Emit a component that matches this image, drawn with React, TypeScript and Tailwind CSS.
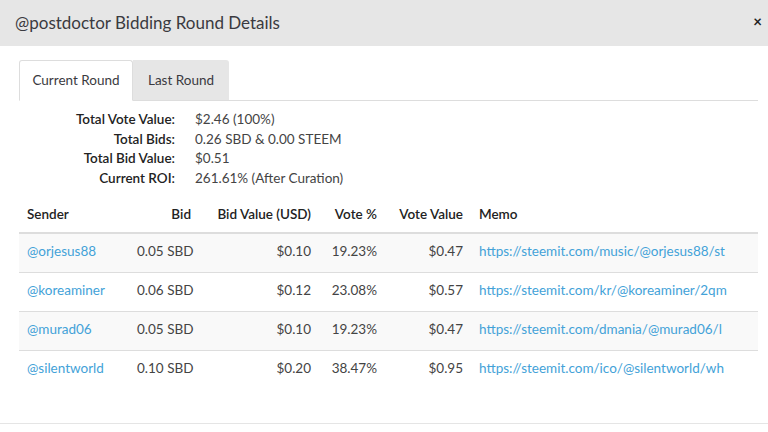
const summary = [
  { label: "Total Vote Value:", value: "$2.46 (100%)" },
  { label: "Total Bids:", value: "0.26 SBD & 0.00 STEEM" },
  { label: "Total Bid Value:", value: "$0.51" },
  { label: "Current ROI:", value: "261.61% (After Curation)" },
]

const bids = [
  { sender: "@orjesus88", bid: "0.05 SBD", usd: "$0.10", pct: "19.23%", vote: "$0.47", memo: "https://steemit.com/music/@orjesus88/st" },
  { sender: "@koreaminer", bid: "0.06 SBD", usd: "$0.12", pct: "23.08%", vote: "$0.57", memo: "https://steemit.com/kr/@koreaminer/2qm" },
  { sender: "@murad06", bid: "0.05 SBD", usd: "$0.10", pct: "19.23%", vote: "$0.47", memo: "https://steemit.com/dmania/@murad06/l" },
  { sender: "@silentworld", bid: "0.10 SBD", usd: "$0.20", pct: "38.47%", vote: "$0.95", memo: "https://steemit.com/ico/@silentworld/wh" },
]

export default function App() {
  return (
    <div className="w-[768px] h-[432px] bg-white flex flex-col overflow-hidden text-[#333] font-['Lato','Noto_Sans',sans-serif]">
      {/* modal header */}
      <div className="h-[46px] shrink-0 bg-[#e6e6e6] flex items-center justify-between pl-[15px] pr-[6px]">
        <div className="text-[17px] text-[#3a3a40]">@postdoctor Bidding Round Details</div>
        <div className="text-[15px] font-bold leading-none text-[#222] -mt-[3px]">×</div>
      </div>

      <div className="flex-1 pl-[19px] pr-[10px] pt-[14px]">
        {/* tabs */}
        <div className="flex border-b border-[#ddd] h-[41px]">
          <div className="w-[114px] h-[41px] bg-white border border-[#ddd] border-b-white rounded-t-[3px] flex items-center justify-center text-[13.5px] text-[#3a3a40]">
            Current Round
          </div>
          <div className="w-[96px] h-[40px] bg-[#e6e6e6] rounded-tr-[3px] flex items-center justify-center text-[13.5px] text-[#3a3a40]">
            Last Round
          </div>
        </div>

        {/* summary */}
        <div className="grid grid-cols-[156px_1fr] gap-x-[20px] mt-[9px] text-[13.5px] leading-[19.5px]">
          {summary.map((s, i) => (
            <div key={i} className="contents">
              <div className="text-right font-semibold text-[#222]">{s.label}</div>
              <div className="text-[#444]">{s.value}</div>
            </div>
          ))}
        </div>

        {/* bids table */}
        <table className="w-full table-fixed mt-[9px] text-[13.5px] border-collapse">
          <colgroup>
            <col className="w-[110px]" />
            <col className="w-[70px]" />
            <col className="w-[120px]" />
            <col className="w-[66px]" />
            <col className="w-[86px]" />
            <col />
          </colgroup>
          <thead>
            <tr className="h-[36px] text-[#222]">
              <th className="text-left px-[8px] font-semibold">Sender</th>
              <th className="text-right px-[8px] font-semibold">Bid</th>
              <th className="text-right px-[8px] font-semibold">Bid Value (USD)</th>
              <th className="text-right px-[8px] font-semibold">Vote %</th>
              <th className="text-right px-[8px] font-semibold">Vote Value</th>
              <th className="text-left px-[8px] font-semibold">Memo</th>
            </tr>
          </thead>
          <tbody className="border-t-2 border-[#ddd]">
            {bids.map((b, i) => (
              <tr key={i} className={`h-[39px] border-t border-[#ddd] first:border-t-0 ${i % 2 === 0 ? "bg-[#f9f9f9]" : "bg-white"} text-[#444]`}>
                <td className="px-[8px] pb-[3px] text-[#43a2d8]">{b.sender}</td>
                <td className="px-[8px] pb-[3px] text-right whitespace-nowrap">{b.bid}</td>
                <td className="px-[8px] pb-[3px] text-right">{b.usd}</td>
                <td className="px-[8px] pb-[3px] text-right">{b.pct}</td>
                <td className="px-[8px] pb-[3px] text-right">{b.vote}</td>
                <td className="px-[8px] pb-[3px]">
                  <div className="w-[250px] overflow-hidden whitespace-nowrap text-[#43a2d8]">{b.memo}</div>
                </td>
              </tr>
            ))}
          </tbody>
        </table>
      </div>

      {/* footer edge */}
      <div className="h-[9px] shrink-0 border-t border-[#e5e5e5]"></div>
    </div>
  )
}
